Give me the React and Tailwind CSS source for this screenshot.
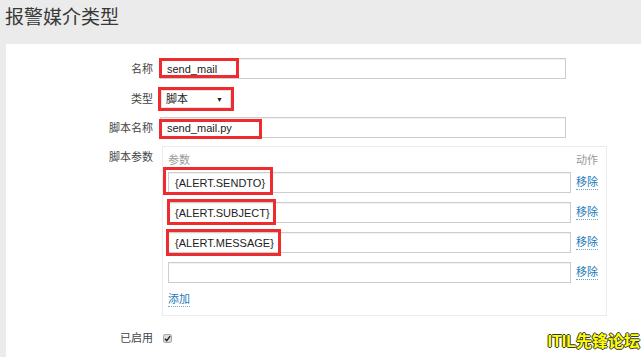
import React from "react";

const RED = "border-[#ee2b2f]";

function TextInput({ width, value, red }) {
  return (
    <div className="relative h-[21px]" style={{ width }}>
      <div className="h-full w-full border border-[#cdcdcd] bg-white flex items-center pl-[6px] text-[11px] leading-[14px] text-[#222] shadow-[inset_0_1px_1px_rgba(0,0,0,0.06)]">
        {value}
      </div>
      {red && (
        <div
          className={`absolute border-[3px] ${RED}`}
          style={{ left: red.l, top: red.t, width: red.w, height: red.h }}
        />
      )}
    </div>
  );
}

function Label({ children, className = "" }) {
  return (
    <div className={`w-[147px] shrink-0 text-right text-[11px] leading-[14px] text-[#444] ${className}`}>
      {children}
    </div>
  );
}

function Link({ children }) {
  return (
    <span className="text-[11px] leading-[14px] text-[#1d7ab8] border-b border-dotted border-[#6aa8d4]">
      {children}
    </span>
  );
}

export default function App() {
  const params = [
    { v: "{ALERT.SENDTO}", red: { l: -5, t: -5, w: 110, h: 28 } },
    { v: "{ALERT.SUBJECT}", red: { l: -1, t: -3, w: 109, h: 26 } },
    { v: "{ALERT.MESSAGE}", red: { l: -2, t: -3, w: 115, h: 27 } },
    { v: "", red: null },
  ];
  return (
    <div className="relative w-[641px] h-[357px] overflow-hidden bg-[#ebebeb] text-[11px] leading-[14px] font-['Liberation_Sans','Noto_Sans_CJK_SC',sans-serif]">
      <div className="h-[44px] pl-[5px] pt-[6px] text-[19px] leading-[24px] text-[#383838]">
        报警媒介类型
      </div>
      <div className="ml-[6px] h-[313px] bg-white pt-[14px]">
        {/* 名称 */}
        <div className="flex items-center h-[21px]">
          <Label>名称</Label>
          <div className="ml-[7px]">
            <TextInput width={406} value="send_mail" red={{ l: -1, t: 0, w: 80, h: 20 }} />
          </div>
        </div>
        {/* 类型 */}
        <div className="flex items-center h-[24px] mt-[8px]">
          <Label>类型</Label>
          <div className={`ml-[5px] w-[76px] h-[24px] border-[3px] ${RED}`}>
            <div className="h-full w-full bg-white border border-[#e2e2e2] flex items-center justify-between pl-[4px] pr-[7px] text-[11px] text-[#222]">
              <span>脚本</span>
              <span className="text-[7px] leading-none">▼</span>
            </div>
          </div>
        </div>
        {/* 脚本名称 */}
        <div className="flex items-center h-[21px] mt-[6px]">
          <Label>脚本名称</Label>
          <div className="ml-[7px]">
            <TextInput width={406} value="send_mail.py" red={{ l: -1, t: 2, w: 103, h: 20 }} />
          </div>
        </div>
        {/* 脚本参数 */}
        <div className="flex items-start mt-[8px]">
          <Label className="mt-[4px]">脚本参数</Label>
          <div className="ml-[9px] w-[445px] border border-[#ececec] pl-[5px] pt-[6px] pb-[8px]">
            <div className="flex h-[14px] text-[11px] leading-[14px] text-[#999]">
              <div className="w-[408px]">参数</div>
              <div>动作</div>
            </div>
            <div className="mt-[5px] flex flex-col gap-[9px]">
              {params.map((p, i) => (
                <div key={i} className="flex items-center h-[21px]">
                  <TextInput width={403} value={p.v} red={p.red} />
                  <div className="ml-[5px] flex items-center h-[21px] text-[11px] leading-[14px]">
                    <Link>移除</Link>
                  </div>
                </div>
              ))}
            </div>
            <div className="mt-[9px] h-[15px] flex items-start text-[11px] leading-[14px]">
              <Link>添加</Link>
            </div>
          </div>
        </div>
        {/* 已启用 */}
        <div className="flex items-center h-[16px] mt-[14px]">
          <Label>已启用</Label>
          <div className="ml-[10px] w-[9px] h-[9px] rounded-[2px] bg-[#dcdcdc] border border-[#a9a9a9] flex items-center justify-center">
            <svg width="7" height="7" viewBox="0 0 8 8">
              <path d="M1 4.2 L3.2 6.4 L7 1.2" fill="none" stroke="#222" strokeWidth="1.6" />
            </svg>
          </div>
        </div>
      </div>
      <div className="absolute right-[1px] bottom-[6px] text-[16px] leading-[18px] font-bold text-[#ffff00] [text-shadow:1px_0_0_#333,-1px_0_0_#333,0_1px_0_#333,0_-1px_0_#333]">
        ITIL先锋论坛
      </div>
    </div>
  );
}
